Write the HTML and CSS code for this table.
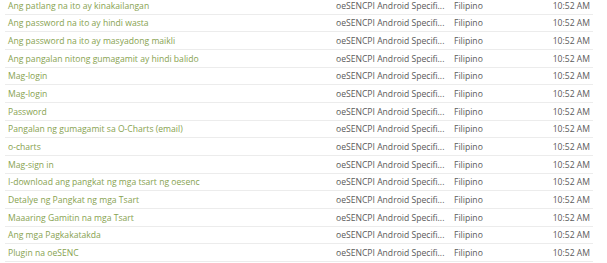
FILE: index.html
```html
<!DOCTYPE html>
<html>
<head>
<meta charset="utf-8">
<link rel="stylesheet" href="styles.css">
</head>
<body>
<div class="list">
  <div class="row"><span class="key">Ang patlang na ito ay kinakailangan</span><span class="proj">oeSENCPI Android Specifi...</span><span class="lang">Filipino</span><span class="time">10:52 AM</span></div>
  <div class="row"><span class="key">Ang password na ito ay hindi wasta</span><span class="proj">oeSENCPI Android Specifi...</span><span class="lang">Filipino</span><span class="time">10:52 AM</span></div>
  <div class="row"><span class="key">Ang password na ito ay masyadong maikli</span><span class="proj">oeSENCPI Android Specifi...</span><span class="lang">Filipino</span><span class="time">10:52 AM</span></div>
  <div class="row"><span class="key">Ang pangalan nitong gumagamit ay hindi balido</span><span class="proj">oeSENCPI Android Specifi...</span><span class="lang">Filipino</span><span class="time">10:52 AM</span></div>
  <div class="row"><span class="key">Mag-login</span><span class="proj">oeSENCPI Android Specifi...</span><span class="lang">Filipino</span><span class="time">10:52 AM</span></div>
  <div class="row"><span class="key">Mag-login</span><span class="proj">oeSENCPI Android Specifi...</span><span class="lang">Filipino</span><span class="time">10:52 AM</span></div>
  <div class="row"><span class="key">Password</span><span class="proj">oeSENCPI Android Specifi...</span><span class="lang">Filipino</span><span class="time">10:52 AM</span></div>
  <div class="row"><span class="key">Pangalan ng gumagamit sa O-Charts (email)</span><span class="proj">oeSENCPI Android Specifi...</span><span class="lang">Filipino</span><span class="time">10:52 AM</span></div>
  <div class="row"><span class="key">o-charts</span><span class="proj">oeSENCPI Android Specifi...</span><span class="lang">Filipino</span><span class="time">10:52 AM</span></div>
  <div class="row"><span class="key">Mag-sign in</span><span class="proj">oeSENCPI Android Specifi...</span><span class="lang">Filipino</span><span class="time">10:52 AM</span></div>
  <div class="row"><span class="key">I-download ang pangkat ng mga tsart ng oesenc</span><span class="proj">oeSENCPI Android Specifi...</span><span class="lang">Filipino</span><span class="time">10:52 AM</span></div>
  <div class="row"><span class="key">Detalye ng Pangkat ng mga Tsart</span><span class="proj">oeSENCPI Android Specifi...</span><span class="lang">Filipino</span><span class="time">10:52 AM</span></div>
  <div class="row"><span class="key">Maaaring Gamitin na mga Tsart</span><span class="proj">oeSENCPI Android Specifi...</span><span class="lang">Filipino</span><span class="time">10:52 AM</span></div>
  <div class="row"><span class="key">Ang mga Pagkakatakda</span><span class="proj">oeSENCPI Android Specifi...</span><span class="lang">Filipino</span><span class="time">10:52 AM</span></div>
  <div class="row"><span class="key">Plugin na oeSENC</span><span class="proj">oeSENCPI Android Specifi...</span><span class="lang">Filipino</span><span class="time">10:52 AM</span></div>
</div>
</body>
</html>
```
FILE: styles.css
```css
html, body {
  margin: 0;
  padding: 0;
  background: #ffffff;
  overflow: hidden;
}
.list {
  margin: -2.9px 0 0 5px;
  width: 588px;
  font-family: "Open Sans", "Liberation Sans", sans-serif;
  font-size: 8.6px;
}
.row {
  display: grid;
  grid-template-columns: 328px 118px 1fr auto;
  align-items: end;
  box-sizing: border-box;
  height: 17.66px;
  padding: 0 3px 2px 3px;
  border-bottom: 1px solid #ececec;
  white-space: nowrap;
}
.key {
  color: #87a24f;
}
.proj, .lang, .time {
  color: #5a5a5a;
}
.time {
  text-align: right;
}
```
